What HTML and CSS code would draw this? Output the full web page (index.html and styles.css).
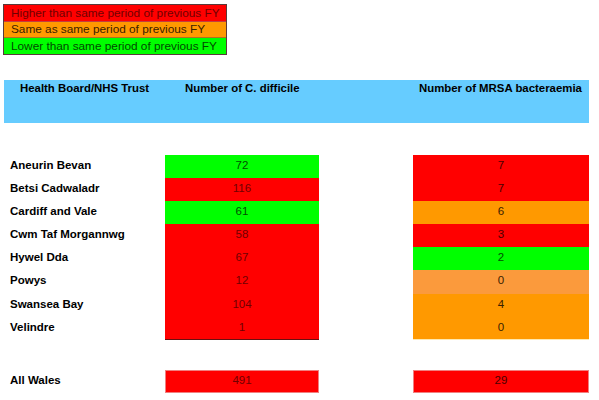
FILE: index.html
```html
<!DOCTYPE html>
<html>
<head>
<meta charset="utf-8">
<link rel="stylesheet" href="styles.css">
</head>
<body>
<div class="page">
  <div class="legend">
    <div class="lg red">Higher than same period of previous FY</div>
    <div class="lg orange">Same as same period of previous FY</div>
    <div class="lg green">Lower than same period of previous FY</div>
  </div>

  <div class="header">
    <div class="h h1">Health Board/NHS Trust</div>
    <div class="h h2">Number of C. difficile</div>
    <div class="h h3">Number of MRSA bacteraemia</div>
  </div>

  <div class="table">
    <div class="name">Aneurin Bevan</div><div class="c1 green">72</div><div></div><div class="c2 red">7</div>
    <div class="name">Betsi Cadwaladr</div><div class="c1 red">116</div><div></div><div class="c2 red">7</div>
    <div class="name">Cardiff and Vale</div><div class="c1 green">61</div><div></div><div class="c2 orange">6</div>
    <div class="name">Cwm Taf Morgannwg</div><div class="c1 red">58</div><div></div><div class="c2 red">3</div>
    <div class="name">Hywel Dda</div><div class="c1 red">67</div><div></div><div class="c2 green">2</div>
    <div class="name">Powys</div><div class="c1 red">12</div><div></div><div class="c2 orange2">0</div>
    <div class="name">Swansea Bay</div><div class="c1 red">104</div><div></div><div class="c2 orange">4</div>
    <div class="name">Velindre</div><div class="c1 red last1">1</div><div></div><div class="c2 orange last2">0</div>
  </div>

  <div class="table total">
    <div class="name">All Wales</div><div class="c1 red boxed">491</div><div></div><div class="c2 red boxed">29</div>
  </div>
</div>
</body>
</html>
```

FILE: styles.css
```css
html, body {
  margin: 0;
  padding: 0;
  background: #ffffff;
}
body {
  font-family: "Liberation Sans", Arial, sans-serif;
  font-size: 11.5px;
  color: #000;
}
.page {
  width: 599px;
  height: 400px;
  overflow: hidden;
}
.legend {
  margin: 4px 0 0 3px;
  width: 222px;
  border: 1px solid #5a3a3a;
}
.lg {
  height: 16px;
  line-height: 16px;
  padding-left: 7px;
  font-size: 11.8px;
}
.lg.red { border-bottom: 1px solid #c04040; color: #700000; }
.lg.orange { border-bottom: 1px solid #b07020; height: 15px; line-height: 15px; color: #3a2000; }
.lg.green { color: #004a00; }
.red { background: #ff0000; color: #700000; }
.orange { background: #ff9900; color: #3a2000; }
.orange2 { background: #fb9a3c; color: #3a2000; }
.green { background: #00ff00; color: #005000; }

.header {
  margin: 25px 0 0 4px;
  width: 585px;
  height: 43px;
  background: #66ccff;
  display: grid;
  grid-template-columns: 181px 234px 170px;
  font-weight: bold;
  font-size: 11.4px;
}
.h {
  padding-top: 2px;
}
.h1 { padding-left: 16px; }

.table {
  margin: 32px 0 0 4px;
  display: grid;
  grid-template-columns: 161px 154px 94px 176px;
  grid-auto-rows: 23.1px;
}
.name {
  padding-left: 6px;
  font-weight: bold;
  line-height: 20px;
}
.c1, .c2 {
  text-align: center;
  line-height: 20px;
}
.c2.red { color: #4a0000; }
.last1 { box-shadow: inset 0 -1px 0 #6a1010; }
.last2 { box-shadow: inset 0 -1px 0 #ffe9b0; }
.total {
  margin-top: 30px;
}
.boxed {
  box-shadow: inset 0 0 0 1px #f08080;
}
```
